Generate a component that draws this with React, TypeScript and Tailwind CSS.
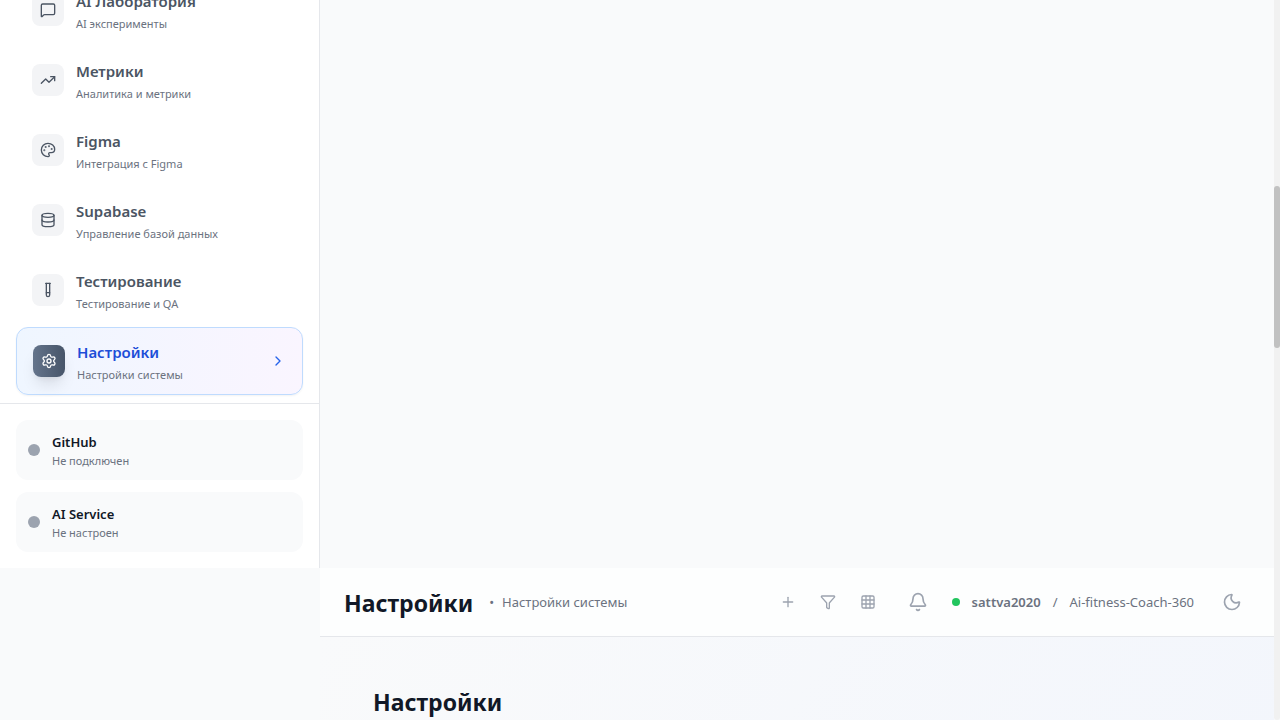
import {
  Bell,
  ChevronRight,
  Database,
  Funnel,
  Grid3x3,
  MessageSquare,
  Moon,
  Palette,
  Plus,
  Settings,
  TestTube,
  TrendingUp,
  type LucideIcon,
} from "lucide-react";

type NavItem = { title: string; subtitle: string; icon: LucideIcon };

const navItems: NavItem[] = [
  { title: "AI Лаборатория", subtitle: "AI эксперименты", icon: MessageSquare },
  { title: "Метрики", subtitle: "Аналитика и метрики", icon: TrendingUp },
  { title: "Figma", subtitle: "Интеграция с Figma", icon: Palette },
  { title: "Supabase", subtitle: "Управление базой данных", icon: Database },
  { title: "Тестирование", subtitle: "Тестирование и QA", icon: TestTube },
];

const services = [
  { name: "GitHub", status: "Не подключен" },
  { name: "AI Service", status: "Не настроен" },
];

function NavLink({ title, subtitle, icon: Icon }: NavItem) {
  return (
    <button type="button" className="flex w-full items-center gap-3 rounded-xl px-4 py-[11px] text-left">
      <span className="flex size-8 shrink-0 items-center justify-center rounded-lg bg-[#f3f4f6] text-[#4b5563]">
        <Icon size={16} />
      </span>
      <span className="flex flex-col pt-px">
        <span className="text-[15px]/6 font-semibold text-[#4b5563]">{title}</span>
        <span className="pt-[3px] text-[11px]/4 text-[#6b7280]">{subtitle}</span>
      </span>
    </button>
  );
}

function Sidebar() {
  return (
    <aside className="flex flex-col border-r border-[#e5e7eb] bg-white">
      <nav className="-mt-[23px] flex flex-col gap-1 px-4 pb-2">
        {navItems.map((item) => (
          <NavLink key={item.title} {...item} />
        ))}
        <button
          type="button"
          aria-current="page"
          className="flex w-full items-center gap-3 rounded-xl border border-[#bfdbfe] bg-linear-to-r from-[#eff6ff] to-[#faf5ff] px-4 py-[11px] text-left shadow-xs"
        >
          <span className="flex size-8 shrink-0 items-center justify-center rounded-lg bg-linear-to-r from-[#64748b] to-[#475569] text-white shadow-lg">
            <Settings size={16} />
          </span>
          <span className="flex grow flex-col pt-px">
            <span className="text-[15px]/6 font-semibold text-[#1d4ed8]">Настройки</span>
            <span className="pt-[3px] text-[11px]/4 text-[#6b7280]">Настройки системы</span>
          </span>
          <ChevronRight size={16} className="text-[#2563eb]" />
        </button>
      </nav>
      <div className="flex flex-col gap-3 border-t border-[#e5e7eb] p-4">
        {services.map((s) => (
          <div key={s.name} className="flex items-center gap-3 rounded-xl bg-[#f9fafb] px-3 py-[11px]">
            <span className="size-3 shrink-0 rounded-full bg-[#9ca3af]" />
            <div className="pt-px">
              <p className="text-[13px]/5 font-semibold text-[#111827]">{s.name}</p>
              <p className="pt-px text-[11px]/4 text-[#6b7280]">{s.status}</p>
            </div>
          </div>
        ))}
      </div>
    </aside>
  );
}

function Header() {
  return (
    <header className="flex items-center justify-between border-b border-[#e5e7eb] bg-[#fdfefe] px-6 py-4">
      <div className="flex items-center gap-4">
        <h1 className="pt-0.5 text-[23px]/8 font-bold text-[#111827]">Настройки</h1>
        <p className="flex gap-2 text-[13px]/5 text-[#6b7280]">
          <span>•</span>
          <span>Настройки системы</span>
        </p>
      </div>
      <div className="flex items-center text-[#9ca3af]">
        <div className="flex gap-2">
          <button type="button" aria-label="Добавить" className="p-2">
            <Plus size={16} />
          </button>
          <button type="button" aria-label="Фильтр" className="p-2">
            <Funnel size={16} />
          </button>
          <button type="button" aria-label="Сетка" className="p-2">
            <Grid3x3 size={16} />
          </button>
        </div>
        <button type="button" aria-label="Уведомления" className="ml-4 p-2">
          <Bell size={20} />
        </button>
        <div className="ml-4 flex items-center gap-3 text-[13px]/5 text-[#6b7280]">
          <span className="size-2 rounded-full bg-[#22c55e]" />
          <span className="font-semibold">sattva2020</span>
          <span>/</span>
          <span>Ai-fitness-Coach-360</span>
        </div>
        <button type="button" aria-label="Тёмная тема" className="ml-5 p-2">
          <Moon size={20} />
        </button>
      </div>
    </header>
  );
}

export default function App() {
  return (
    <div className="flex h-screen overflow-hidden bg-[#f9fafb] font-['Noto_Sans',sans-serif]">
      <div className="grid min-w-0 grow grid-cols-[320px_minmax(0,1fr)] grid-rows-[auto_1fr]">
        <Sidebar />
        <div className="col-start-2 row-start-2 flex flex-col">
          <Header />
          <main className="grow bg-linear-120 from-[#f9fafb] to-[#f3f6fc] px-[53px] py-[47px]">
            <h2 className="text-[23px]/9 font-bold text-[#111827]">Настройки</h2>
          </main>
        </div>
      </div>
      <div className="w-1.5 shrink-0 rounded-b-sm bg-[#f1f1f1]">
        <div className="mt-[186px] h-[162px] rounded-full bg-[#c1c1c1]" />
      </div>
    </div>
  );
}
